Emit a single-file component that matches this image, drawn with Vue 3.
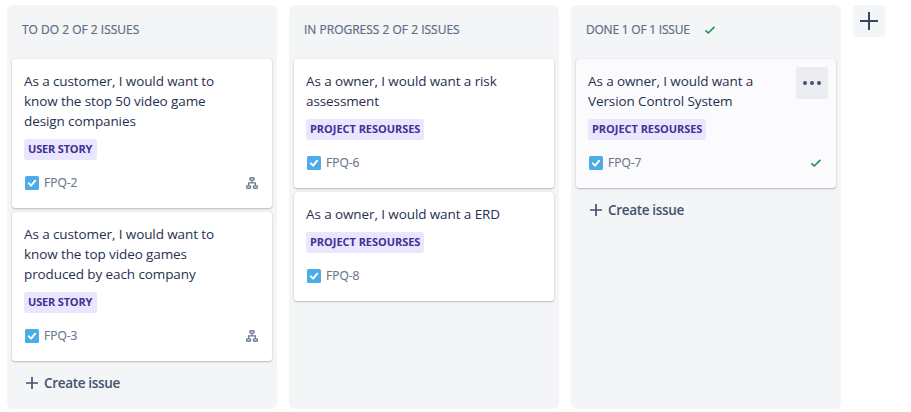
<script setup>
const columns = [
  {
    title: 'TO DO 2 OF 2 ISSUES',
    tone: 'todo',
    create: true,
    cards: [
      { title: 'As a customer, I would want to\nknow the stop 50 video game\ndesign companies', label: 'USER STORY', tag: 'story', id: 'FPQ-2', tree: true },
      { title: 'As a customer, I would want to\nknow the top video games\nproduced by each company', label: 'USER STORY', tag: 'story', id: 'FPQ-3', tree: true },
    ],
  },
  {
    title: 'IN PROGRESS 2 OF 2 ISSUES',
    tone: 'progress',
    cards: [
      { title: 'As a owner, I would want a risk\nassessment', label: 'PROJECT RESOURSES', tag: 'resources', id: 'FPQ-6' },
      { title: 'As a owner, I would want a ERD', label: 'PROJECT RESOURSES', tag: 'resources', id: 'FPQ-8' },
    ],
  },
  {
    title: 'DONE 1 OF 1 ISSUE',
    tone: 'done',
    create: true,
    done: true,
    cards: [
      { title: 'As a owner, I would want a\nVersion Control System', label: 'PROJECT RESOURSES', tag: 'resources', id: 'FPQ-7', done: true, hover: true },
    ],
  },
]
</script>

<template>
  <main class="board">
    <section v-for="col in columns" :key="col.title" class="column">
      <header class="head">
        <h2 class="head-title" :class="col.tone">{{ col.title }}</h2>
        <svg v-if="col.done" class="tick" viewBox="0 0 12 10"><path d="M1.4 5.3 4.3 8 10.4 1.9" /></svg>
      </header>
      <div class="cards">
        <article v-for="card in col.cards" :key="card.id" class="card" :class="{ hover: card.hover }">
          <p class="title">{{ card.title }}</p>
          <span class="label" :class="card.tag">{{ card.label }}</span>
          <footer class="foot">
            <svg class="task" viewBox="0 0 14 14">
              <rect width="14" height="14" rx="1.6" fill="#4bade8" />
              <path d="M3.8 7.4 6.1 9.6 10.2 4.7" fill="none" stroke="#fff" stroke-width="2" stroke-linecap="round" stroke-linejoin="round" />
            </svg>
            <span class="key">{{ card.id }}</span>
            <svg v-if="card.tree" class="tree" viewBox="0 0 12 12">
              <rect x="3.9" y="0.7" width="4.2" height="2.4" rx="0.7" />
              <rect x="0.7" y="8.9" width="3.8" height="2.4" rx="0.7" />
              <rect x="7.5" y="8.9" width="3.8" height="2.4" rx="0.7" />
              <path d="M6 3.2V6M2.6 8.8V5.9H9.4V8.8" />
            </svg>
            <svg v-if="card.done" class="tick" viewBox="0 0 12 10"><path d="M1.4 5.3 4.3 8 10.4 1.9" /></svg>
          </footer>
          <button v-if="card.hover" class="more" aria-label="More">
            <svg viewBox="0 0 18 4"><circle cx="2" cy="2" r="2" /><circle cx="9" cy="2" r="2" /><circle cx="16" cy="2" r="2" /></svg>
          </button>
        </article>
      </div>
      <button v-if="col.create" class="create">
        <svg class="plus" viewBox="0 0 12 12"><path d="M6 0V12M0 6H12" /></svg>
        <span class="create-text">Create issue</span>
      </button>
    </section>
    <button class="add" aria-label="Add column">
      <svg viewBox="0 0 18 18"><path d="M9 0V18M0 9H18" /></svg>
    </button>
  </main>
</template>

<style>
body {
  background: #fff;
}
</style>

<style scoped>
.board {
  display: flex;
  align-items: flex-start;
  gap: 12px;
  height: 412px;
  padding: 5px 0 3px 7px;
  box-sizing: border-box;
  overflow: hidden;
  font-family: "Open Sans", sans-serif;
}
button {
  border: 0;
  padding: 0;
  font-family: inherit;
}
.column {
  flex: none;
  width: 270px;
  height: 404px;
  box-sizing: border-box;
  padding: 0 5px;
  border-radius: 6px;
  background: #f4f5f7;
}
.head {
  display: flex;
  align-items: center;
  height: 54px;
  padding: 0 10px 4px;
  box-sizing: border-box;
}
.head-title {
  margin: 0;
  font-size: 12px;
  line-height: 16px;
  font-weight: 400;
  color: #5e6c84;
  -webkit-text-stroke: 0.2px #5e6c84;
  white-space: nowrap;
}
.head-title.done {
  letter-spacing: -0.22px;
}
.tick {
  width: 12px;
  height: 10px;
  fill: none;
  stroke: #1f8a63;
  stroke-width: 1.6;
}
.head .tick {
  margin-left: 14px;
}
.cards {
  display: flex;
  flex-direction: column;
  gap: 4px;
}
.card {
  position: relative;
  padding: 12px 12px 13px;
  border-radius: 3px;
  background: #fff;
  box-shadow: 0 1px 2px rgba(9, 30, 66, 0.25), 0 0 1px rgba(9, 30, 66, 0.2);
}
.card.hover {
  background: #fbfbfd;
}
.title {
  margin: 0 0 8px;
  font-size: 13.5px;
  line-height: 20px;
  letter-spacing: -0.1px;
  color: #1f3050;
  white-space: pre;
}
.label {
  display: block;
  width: fit-content;
  height: 21px;
  padding: 0 4px;
  border-radius: 3px;
  background: #eae6ff;
  color: #403294;
  font-size: 11px;
  font-weight: 700;
  line-height: 20px;
  white-space: nowrap;
  box-sizing: border-box;
}
.label.story {
  width: 73px;
  letter-spacing: -0.18px;
}
.label.resources {
  width: 118px;
  letter-spacing: -0.04px;
}
.foot {
  display: flex;
  align-items: center;
  height: 24px;
  margin-top: 11px;
  padding: 0 2px 0 1px;
}
.task {
  width: 14px;
  height: 14px;
}
.key {
  flex: 1;
  margin-left: 5px;
  font-size: 12px;
  line-height: 16px;
  color: #6b778c;
  -webkit-text-stroke: 0.15px #6b778c;
}
.tree {
  width: 12px;
  height: 12px;
  fill: none;
  stroke: #6f7c92;
  stroke-width: 1.4;
}
.more {
  position: absolute;
  top: 8px;
  right: 8px;
  display: grid;
  place-items: center;
  width: 32px;
  height: 32px;
  border-radius: 3px;
  background: #ebecf0;
}
.more svg {
  width: 18px;
  height: 4px;
  fill: #42526e;
}
.create {
  display: flex;
  align-items: center;
  height: 44px;
  padding-left: 14px;
  background: transparent;
  color: #42526e;
}
.plus {
  width: 12px;
  height: 12px;
  margin-right: 6px;
  stroke: #42526e;
  stroke-width: 1.7;
}
.create-text {
  font-size: 13.5px;
  line-height: 20px;
  font-weight: 600;
  letter-spacing: -0.33px;
}
.add {
  display: grid;
  place-items: center;
  width: 32px;
  height: 32px;
  border-radius: 3px;
  background: #f4f5f7;
}
.add svg {
  width: 18px;
  height: 18px;
  stroke: #344563;
  stroke-width: 2;
}
</style>
